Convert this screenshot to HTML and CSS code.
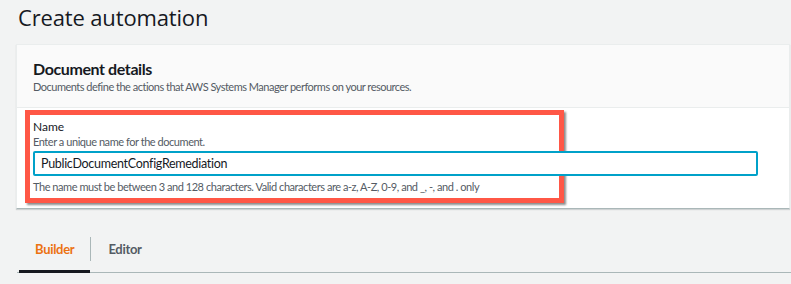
FILE: index.html
```html
<!DOCTYPE html>
<html lang="en">
  <head>
    <meta charset="UTF-8" />
    <meta name="viewport" content="width=device-width, initial-scale=1.0" />
    <link rel="stylesheet" href="styles.css">
    <title>Create automation</title>
  </head>
  <body>
    <h1 class="page-title">Create automation</h1>

    <div class="card">
      <div class="card-header">
        <h2 class="card-title">Document details</h2>
        <p class="card-desc">Documents define the actions that AWS Systems Manager performs on your resources.</p>
      </div>
      <div class="card-body">
        <div class="field highlight">
          <label class="field-label" for="docName">Name</label>
          <p class="field-hint">Enter a unique name for the document.</p>
          <input id="docName" class="field-input" type="text" value="PublicDocumentConfigRemediation" />
          <p class="field-note">The name must be between 3 and 128 characters. Valid characters are a-z, A-Z, 0-9, and _, -, and . only</p>
        </div>
      </div>
    </div>

    <div class="tabs">
      <span class="tab active">Builder</span>
      <span class="tab-sep"></span>
      <span class="tab">Editor</span>
    </div>
  </body>
</html>
```

FILE: styles.css
```css
* {
  margin: 0;
  padding: 0;
  box-sizing: border-box;
}
body {
  background-color: #f2f3f3;
  font-family: "Lato", "Open Sans", sans-serif;
  color: #16191f;
}
.page-title {
  font-family: "Open Sans", sans-serif;
  font-size: 22px;
  font-weight: 400;
  line-height: 34px;
  letter-spacing: -0.15px;
  padding: 0 0 0 18px;
  height: 44px;
}
.card {
  margin: 0 1px 0 16px;
  background-color: #fff;
  border: 1px solid #eaeded;
  border-bottom-color: #aab7b8;
  box-shadow: 0 1px 1px rgba(0, 28, 36, 0.15);
}
.card-header {
  background-color: #fafafa;
  border-bottom: 1px solid #eaeded;
  padding: 14px 16px 0 16px;
  height: 63px;
}
.card-title {
  font-size: 16px;
  font-weight: 700;
  line-height: 20px;
  letter-spacing: -0.4px;
}
.card-desc {
  font-size: 11px;
  line-height: 16px;
  letter-spacing: -0.5px;
  color: #545b64;
}
.card-body {
  padding: 2px 0 0 8px;
  height: 100px;
}
.field {
  width: 539px;
  height: 93px;
  border: 5px solid #ff5746;
  box-shadow: 2px 2px 2px rgba(0, 0, 0, 0.45);
  padding: 4px 0 0 3px;
  position: relative;
  z-index: 1;
}
.field-label {
  display: block;
  font-size: 12px;
  line-height: 16px;
}
.field-hint,
.field-note {
  font-size: 11px;
  line-height: 14px;
  letter-spacing: -0.45px;
  color: #545b64;
  white-space: nowrap;
}
.field-hint {
  margin-bottom: 2px;
}
.field-input {
  display: block;
  width: 725px;
  height: 25px;
  border: 2px solid #00a1c9;
  border-radius: 2px;
  padding: 0 6px;
  font-family: inherit;
  font-size: 12.5px;
  letter-spacing: -0.3px;
  color: #16191f;
  outline: none;
  background: #fff;
  margin-bottom: 4px;
}
.tabs {
  display: flex;
  align-items: flex-start;
  margin: 23px 0 0 17px;
  border-bottom: 1px solid #aab7b8;
  height: 41px;
}
.tab {
  font-size: 13px;
  font-weight: 700;
  letter-spacing: -0.3px;
  color: #545b64;
  padding: 8px 16px 0 17px;
  line-height: 18px;
  height: 41px;
  margin-bottom: -1px;
}
.tab.active {
  color: #ec7211;
  margin-left: 2px;
  padding: 8px 16px 0 16px;
  border-bottom: 3px solid #16191f;
}
.tab-sep {
  width: 1px;
  height: 24px;
  margin-top: 5px;
  background-color: #aab7b8;
}
```
